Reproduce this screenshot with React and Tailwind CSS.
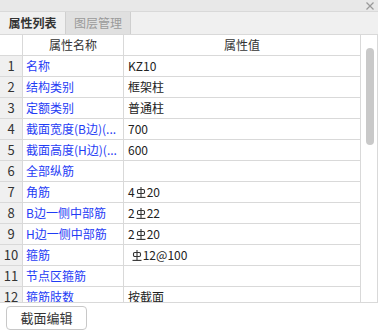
import React from 'react';

const rows = [
	{ no: 1, name: '名称', value: 'KZ10' },
	{ no: 2, name: '结构类别', value: '框架柱' },
	{ no: 3, name: '定额类别', value: '普通柱' },
	{ no: 4, name: '截面宽度(B边)(...', value: '700' },
	{ no: 5, name: '截面高度(H边)(...', value: '600' },
	{ no: 6, name: '全部纵筋', value: '' },
	{ no: 7, name: '角筋', value: ['4', 'bar', '20'] },
	{ no: 8, name: 'B边一侧中部筋', value: ['2', 'bar', '22'] },
	{ no: 9, name: 'H边一侧中部筋', value: ['2', 'bar', '20'] },
	{ no: 10, name: '箍筋', value: ['\u00a0', 'bar', '12@100'] },
	{ no: 11, name: '节点区箍筋', value: '' },
	{ no: 12, name: '箍筋肢数', value: '按截面' },
];

// HRB400 rebar grade symbol
const BarIcon = () => (
	<svg width="10" height="11" viewBox="0 0 10 11" className="inline-block mx-[1px] align-[-1px]" fill="none" stroke="#333" strokeWidth="1.1">
		<line x1="5" y1="0" x2="5" y2="10.5" />
		<rect x="1.5" y="2.5" width="7" height="4" rx="1.2" />
		<line x1="0.5" y1="10.4" x2="9.5" y2="10.4" />
	</svg>
);

const Value = ({ value }) => {
	if (Array.isArray(value)) {
		return (
			<span>
				{value.map((part, i) => (part === 'bar' ? <BarIcon key={i} /> : <span key={i}>{part}</span>))}
			</span>
		);
	}
	return value;
};

const App = () => {
	return (
		<div className="w-[378px] h-[333px] bg-white overflow-hidden text-[12px] text-[#333] font-['Noto_Sans_CJK_SC',sans-serif]">
			{/* Title strip */}
			<div className="h-[12px] bg-[#e8e8e8] border-b border-[#d9d9d9] flex justify-end items-center pr-[4px]">
				<svg width="8" height="8" viewBox="0 0 8 8" stroke="#9a9a9a" strokeWidth="1.3">
					<line x1="0.5" y1="0.5" x2="7.5" y2="7.5" />
					<line x1="7.5" y1="0.5" x2="0.5" y2="7.5" />
				</svg>
			</div>

			{/* Tabs */}
			<div className="h-[23px] bg-[#f0f0f0] border-b border-[#d9d9d9] flex">
				<div className="w-[65px] h-[22px] flex items-center justify-center font-bold text-[#333]">属性列表</div>
				<div className="w-[66px] h-[22px] flex items-center justify-center text-[#9a9a9a] bg-[#e0e0e0] border-x border-[#cfcfcf]">图层管理</div>
			</div>

			{/* Grid */}
			<div className="flex h-[268px] border-b border-[#d9d9d9]">
				<div className="w-[361px] overflow-hidden border-r border-[#d9d9d9]">
					<div className="flex h-[21px] border-b border-[#d9d9d9]">
						<div className="w-[23px] border-r border-[#d9d9d9]" />
						<div className="w-[101px] border-r border-[#d9d9d9] flex items-center justify-center">属性名称</div>
						<div className="flex-1 flex items-center justify-center">属性值</div>
					</div>
					{rows.map((row) => (
						<div key={row.no} className="flex h-[21px] shrink-0 border-b border-[#d9d9d9]">
							<div className="w-[23px] bg-[#f0f0f0] border-r border-[#d9d9d9] flex items-center justify-center text-[13px] text-[#333]">{row.no}</div>
							<div className="w-[101px] border-r border-[#d9d9d9] flex items-center pl-[3px] text-[#1f3cf5] whitespace-nowrap overflow-hidden">{row.name}</div>
							<div className="flex-1 flex items-center pl-[4px] text-[#222] whitespace-nowrap">
								<Value value={row.value} />
							</div>
						</div>
					))}
				</div>
				{/* Scrollbar */}
				<div className="w-[17px] border-r border-[#d9d9d9] pt-[13px] pl-[5px]">
					<div className="w-[8px] h-[97px] rounded-full bg-[#c9c9c9]" />
				</div>
			</div>

			{/* Footer */}
			<div className="pt-[3px] pl-[6px]">
				<button className="w-[81px] h-[24px] rounded-[4px] border border-[#c8c8c8] bg-white text-[13px] text-[#333] flex items-center justify-center">截面编辑</button>
			</div>
		</div>
	);
};

export default App;
